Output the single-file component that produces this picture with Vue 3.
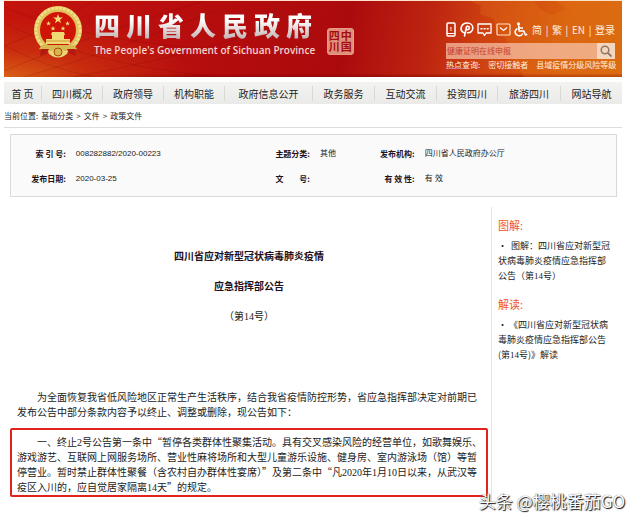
<script setup>
const title = '四川省人民政府'.split('')
const nav = ['首 页', '四川概况', '政府领导', '机构职能', '政府信息公开', '政务服务', '互动交流', '投资四川', '旅游四川', '网站导航']
const info = [
  ['索 引 号:', '008282882/2020-00223'],
  ['主题分类:', '其他'],
  ['发布机构:', '四川省人民政府办公厅'],
  ['发布日期:', '2020-03-25'],
  ['文　　号:', ''],
  ['有 效 性:', '有 效'],
]
</script>

<template>
  <div class="page">
    <header class="banner">
      <svg class="texture" viewBox="0 0 618 76" preserveAspectRatio="none" aria-hidden="true">
        <g fill="none" stroke="#7a0000" stroke-opacity=".18">
          <path d="M0 6 Q90 45 250 50 M0 22 Q80 62 210 76 M0 44 Q40 66 90 76 M0 70 Q70 40 200 0 M20 76 Q110 50 210 10 M70 76 Q160 60 260 30 M0 45 Q40 30 90 0" />
        </g>
        <path d="M466 0 L477 5 L476 13 L490 18 L492 30 L502 38 L510 60 L520 76 H618 V0 H552 L562 8 L548 14 L536 8 L530 0 Z" fill="#e8851c" fill-opacity=".22" />
      </svg>
      <div class="brand">
        <svg class="emblem" viewBox="0 0 50 52" aria-hidden="true">
          <circle cx="25" cy="24" r="20" fill="#cf1508" />
          <circle cx="25" cy="24" r="21" fill="none" stroke="#dfc05a" stroke-width="6" />
          <circle cx="25" cy="24" r="22" fill="none" stroke="#f0df88" stroke-width="3" stroke-dasharray="3 1" />
          <path d="M25 8l1.2 3.500h3.700l-3 2.200 1.100 3.500-3-2.100-3 2.100 1.100-3.500-3-2.200h3.700z M15.500 15l.7 1.700h1.800l-1.500 1.100.6 1.700-1.600-1-1.500 1 .5-1.700-1.400-1.100h1.800z M34.500 15l.7 1.700h1.800l-1.500 1.100.6 1.700-1.600-1-1.500 1 .5-1.700-1.400-1.100h1.800z M20 20l.7 1.700h1.800l-1.500 1.100.6 1.700-1.600-1-1.500 1 .5-1.700-1.400-1.100h1.800z M30 20l.7 1.700h1.800l-1.500 1.100.6 1.700-1.600-1-1.500 1 .5-1.700-1.400-1.100h1.800z" fill="#f3dc78" />
          <path d="M19 26h12l1 3h-1v4h6v5H13v-5h6v-4h-1z" fill="#f0d873" />
          <path d="M13 35h24" stroke="#cf9a36" />
          <path d="M9 39h32l3 4-9 2H15l-9-2z" fill="#d8b851" />
          <path d="M8 43l-1 7 7-3 2-4zM42 43l1 7-7-3-2-4z" fill="#b51a10" />
          <path d="M15 47q5-5 10-1 5-4 10 1l-4 3q-6 3-12 0z" fill="#ecd575" />
          <circle cx="25" cy="46" r="4" fill="#d9b64c" stroke="#a6500f" />
        </svg>
        <div class="names">
          <h1><span v-for="(c, i) in title" :key="i">{{ c }}</span></h1>
          <p>The People's Government of Sichuan Province</p>
        </div>
        <div class="seal">中国四川</div>
      </div>
      <div class="tools">
        <div class="quick">
          <a href="#" class="ico" aria-label="手机版">
            <svg width="10" height="15" viewBox="0 0 10 15"><rect x="1" y="1" width="8" height="13" rx="1" fill="none" stroke="#fff" stroke-width="1.500" /><path d="M1 11.500h8" stroke="#fff" /><path d="M5 5v4M4 6h1" stroke="#ffd6c8" /></svg>
          </a>
          <a href="#" class="ico" aria-label="微博">
            <svg width="14" height="15" viewBox="0 0 14 15"><path d="M4.500 11C1.500 10 .8 7.500 1.200 5.500 2 2.500 4.500 1 7.300 1c3.300 0 5.500 2.300 5.500 5 0 3-2.300 5-5.300 4.700M4.500 14L6.500 5M6 7c0-2 1-3 2-2.800 2 .3 1.800 3.600-.8 3.600" fill="none" stroke="#fff" stroke-width="1.600" stroke-linecap="round" /></svg>
          </a>
          <a href="#" class="ico" aria-label="留言">
            <svg width="15" height="15" viewBox="0 0 15 15"><path d="M1 2h13v9H9l-1.500 2.500L6 11H1z" fill="none" stroke="#fff" stroke-width="1.300" stroke-linejoin="round" /><path d="M3.500 6h2v1.500h-2zM6.600 6h2v1.500h-2zM9.700 6h2v1.500h-2z" fill="#fff" /></svg>
          </a>
          <a href="#" class="ico" aria-label="邮箱">
            <svg width="15" height="15" viewBox="0 0 15 15"><rect x="1" y="2" width="13" height="11" rx="1" fill="none" stroke="#ffe3c4" stroke-width="1.200" /><path d="M4 5.500l3.500 3 3.500-3" fill="none" stroke="#fff" stroke-width="1.200" /></svg>
          </a>
          <a href="#" class="ico" aria-label="无障碍">
            <svg width="14" height="15" viewBox="0 0 14 15"><circle cx="4.500" cy="1.800" r="1.600" fill="#fff" /><path d="M4.700 3.500l.5 5.500h4.500l1.800 4 1.800-.8M5 6h4" fill="none" stroke="#fff" stroke-width="1.700" /><path d="M3.500 6.500C1.500 7.500.8 9 1.200 10.700c.8 3.600 6 4.300 7.600.8" fill="none" stroke="#fff" stroke-width="1.500" /></svg>
          </a>
          <a href="#">简</a><i>|</i><a href="#">繁</a><i>|</i><a href="#">EN</a><i>|</i><a href="#">登录</a>
        </div>
        <form class="search" @submit.prevent>
          <input type="text" aria-label="搜索" placeholder="健康证明在线申报" />
          <button type="submit" aria-label="查询">
            <svg width="12" height="12" viewBox="0 0 12 12"><circle cx="5" cy="5" r="3.800" fill="none" stroke="#8d7768" stroke-width="1.500" /><path d="M8 8l3.500 3.500" stroke="#8d7768" stroke-width="1.800" /></svg>
          </button>
        </form>
        <div class="hot"><span>热点查询:</span><a href="#">密切接触者</a><a href="#">县域疫情分级风险等级</a></div>
      </div>
    </header>

    <nav class="menu">
      <a v-for="n in nav" :key="n" href="#">{{ n }}</a>
    </nav>

    <div class="crumbs"><span>当前位置:</span><a href="#">基础分类</a><span>&gt;</span><a href="#">文件</a><span>&gt;</span><a href="#">政策文件</a></div>

    <dl class="info">
      <template v-for="row in info" :key="row[0]">
        <dt>{{ row[0] }}</dt>
        <dd>{{ row[1] }}</dd>
      </template>
    </dl>

    <div class="content">
      <article>
        <h2>四川省应对新型冠状病毒肺炎疫情<br />应急指挥部公告</h2>
        <p class="issue">（第<b>14</b>号）</p>
        <p class="para">为全面恢复我省低风险地区正常生产生活秩序，结合我省疫情防控形势，省应急指挥部决定对前期已<br />发布公告中部分条款内容予以终止、调整或删除，现公告如下：</p>
        <p class="para marked">一、终止<b>2</b>号公告第一条中“暂停各类群体性聚集活动。具有交叉感染风险的经营单位，如歌舞娱乐、<br />游戏游艺、互联网上网服务场所、营业性麻将场所和大型儿童游乐设施、健身房、室内游泳场（馆）等暂<br />停营业。暂时禁止群体性聚餐（含农村自办群体性宴席）”及第二条中“凡<b>2020</b>年<b>1</b>月<b>10</b>日以来，从武汉等<br />疫区入川的，应自觉居家隔离<b>14</b>天”的规定。</p>
      </article>
      <aside>
        <h3>图解:</h3>
        <a href="#">·&nbsp; 图解：四川省应对新型冠<br />状病毒肺炎疫情应急指挥部<br />公告（第<b>14</b>号）</a>
        <h3>解读:</h3>
        <a href="#">·&nbsp;《四川省应对新型冠状病<br />毒肺炎疫情应急指挥部公告<br />(第<b>14</b>号)》解读</a>
      </aside>
    </div>
    <div class="watermark">头条 @樱桃番茄GO</div>
  </div>
</template>

<style>
body {
  background: #fff;
}
</style>

<style scoped>
.page {
  position: relative;
  padding: 0 18px 18px 4px;
  font-family: "Noto Sans CJK SC", sans-serif;
  font-size: 10px;
  line-height: 15px;
  color: #222;
}
a {
  color: inherit;
  text-decoration: none;
}
h1, h2, h3, p, dl, dd {
  margin: 0;
}
.banner {
  position: relative;
  display: flex;
  justify-content: space-between;
  height: 76px;
  border-top: 1px solid #fbe3cb;
  background:
    radial-gradient(ellipse 190px 60px at 0 100%, #d95f14 0, rgba(205, 60, 15, .6) 45%, transparent 100%),
    linear-gradient(180deg, transparent 95%, rgba(120, 0, 0, .5)),
    linear-gradient(100deg, #c5140d 0, #b90e0e 25%, #ab0a0d 55%, #bd2410 68%, #cf4410 78%, #d95f0e 90%, #d8660d 100%);
}
.texture {
  position: absolute;
  inset: 0;
  width: 100%;
  height: 100%;
}
.brand, .tools {
  position: relative;
}
.brand {
  display: flex;
  align-items: flex-start;
  padding: 5px 0 0 29px;
}
.emblem {
  width: 50px;
  height: 52px;
}
.names {
  padding: 2px 12px 0 11px;
}
h1 {
  display: flex;
  gap: 6px;
  font-size: 26px;
  line-height: 34px;
  font-weight: 900;
}
h1 span {
  color: transparent;
  background: linear-gradient(#fff 35%, #c9bcbc 85%);
  background-clip: text;
}
.names p {
  font: 600 10px/16px "Open Sans", sans-serif;
  color: #f3d3ce;
  white-space: nowrap;
}
.seal {
  box-sizing: border-box;
  width: 27px;
  height: 27px;
  margin-top: 22px;
  padding: 1px;
  border: 1px solid #e79a86;
  border-radius: 3px;
  background: #e08f7c;
  color: #a50d0d;
  font-size: 11px;
  line-height: 12px;
  font-weight: 700;
  writing-mode: vertical-rl;
}
.tools {
  width: 176px;
  padding-top: 20px;
  color: #fff0e2;
}
.quick {
  display: flex;
  align-items: center;
  gap: 3px;
  height: 16px;
  width: 169px;
  justify-content: space-between;
}
.ico {
  display: flex;
}
.quick i {
  font-style: normal;
}
.search {
  display: flex;
  width: 169px;
  height: 16px;
  margin-top: 6px;
}
.search input {
  flex: 1;
  min-width: 0;
  border: 0;
  padding: 0 1px;
  background: rgba(248, 196, 172, .72);
  font: 8px/16px "Noto Sans CJK SC", sans-serif;
  outline: 0;
}
.search input::placeholder {
  color: #c6402c;
}
.search button {
  display: flex;
  align-items: center;
  justify-content: center;
  width: 18px;
  padding: 0;
  border: 0;
  background: #f3d6bd;
}
.hot {
  display: flex;
  gap: 8px;
  font-size: 8px;
  line-height: 12px;
  white-space: nowrap;
}
.menu {
  display: grid;
  grid-template-columns: 37fr 61fr 61fr 61fr 88fr 62fr 62fr 61fr 63fr 62fr;
  align-items: center;
  height: 22px;
  margin-top: 5px;
  background: linear-gradient(#f3f3f1, #eaeae8);
  text-align: center;
  white-space: nowrap;
}
.menu a + a {
  border-left: 1px solid #dcd8d4;
}
.crumbs {
  display: flex;
  gap: 3px;
  padding: 4px 0 3px;
  border-bottom: 1px solid #ddd;
  font-size: 8px;
  line-height: 16px;
}
.info {
  display: grid;
  grid-template-columns: 55fr 172fr 53fr 42fr 43fr 192fr;
  gap: 10px;
  margin: 6px 5px 0 6px;
  padding: 11px 0 10px;
  border: 1px solid #d9d9d9;
  background: #fafafa;
  font-size: 8px;
  white-space: nowrap;
}
.info dt {
  display: flex;
  justify-content: flex-end;
  font-weight: 700;
  color: #22101c;
}
.info dd {
  font-family: "Liberation Sans", "Noto Sans CJK SC", sans-serif;
}
.content {
  display: flex;
  margin-top: 10px;
  min-height: 300px;
}
article {
  flex: 478;
  padding: 0 3px 0 6px;
  border-right: 1px solid #e4e4e4;
  white-space: nowrap;
}
h2 {
  margin-top: 34px;
  font-size: 10px;
  line-height: 30px;
  text-align: center;
  color: #22101c;
}
.issue {
  line-height: 30px;
  text-align: center;
}
.para {
  padding: 58px 0 9px 7px;
}
.para::before {
  content: "";
  display: inline-block;
  width: 2em;
}
.marked {
  padding: 4px 0 1px 5px;
  border: 2px solid #e0231c;
  border-radius: 2px;
}
b {
  font-family: "Liberation Serif", serif;
  font-weight: 400;
  line-height: 1;
}
aside {
  flex: 124;
  padding: 10px 0 0 6px;
  font-size: 9px;
  white-space: nowrap;
}
aside a {
  display: block;
  margin: 4px 0 13px;
}
h3 {
  font-size: 11px;
  line-height: 17px;
  font-weight: 400;
  color: #f0552b;
}
.watermark {
  position: absolute;
  right: 15px;
  bottom: 12px;
  font-size: 17px;
  line-height: 24px;
  color: #fff;
  text-shadow: 1px 1px 1px #111, 0 0 1px #555;
}
</style>
